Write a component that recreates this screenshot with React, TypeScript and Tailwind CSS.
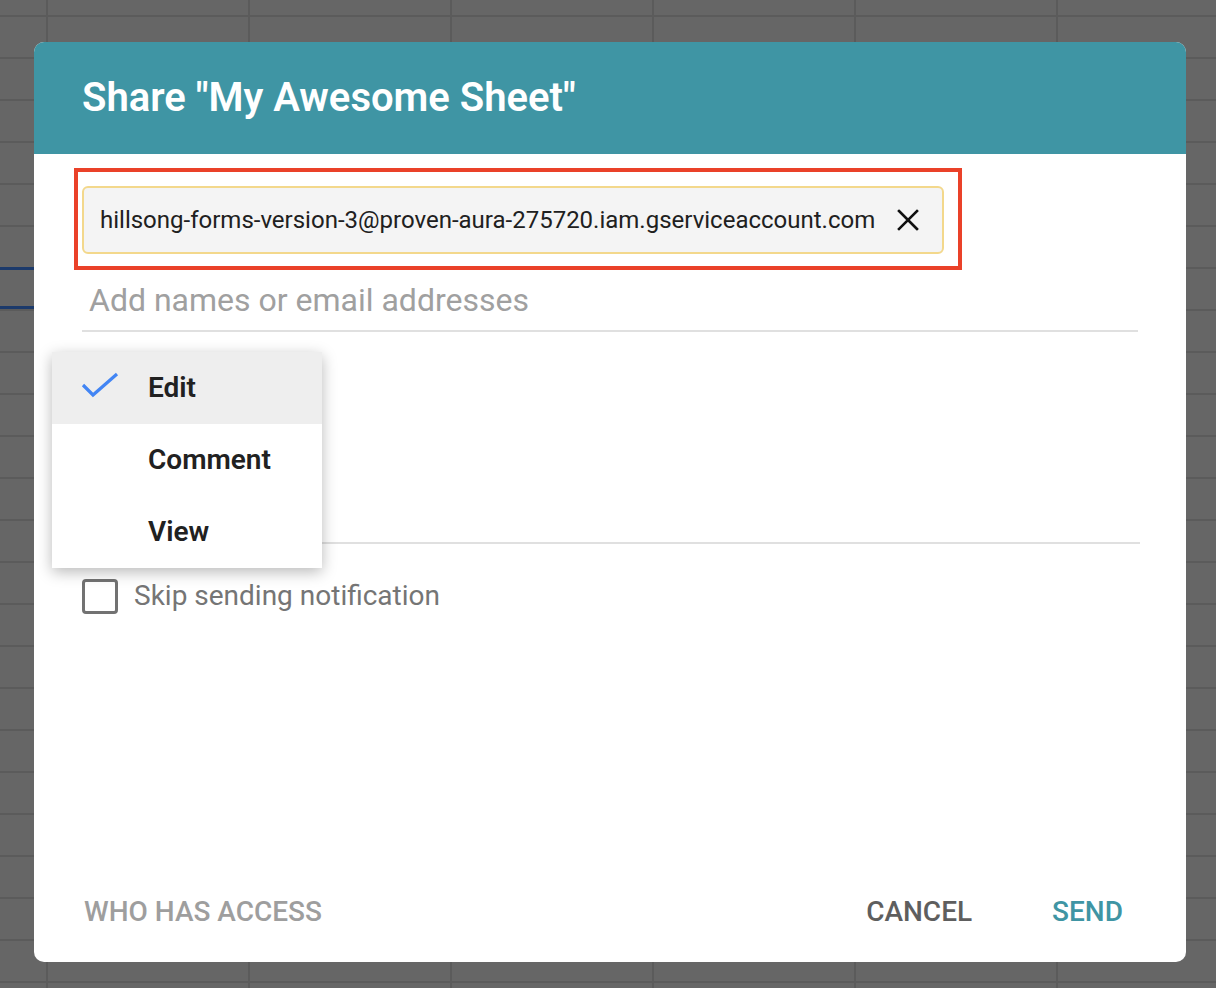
import React from "react";

export default function App() {
  return (
    <div
      className="relative w-[1216px] h-[988px] overflow-hidden bg-[#666666] bg-[linear-gradient(to_right,#5b5b5b_2px,transparent_2px),linear-gradient(to_bottom,#5b5b5b_2px,transparent_2px)] [background-size:202px_42px] [background-position:46px_15px]"
      style={{ fontFamily: "Roboto, 'Noto Sans', sans-serif" }}
    >
      {/* selected cell border on sheet */}
      <div className="absolute left-0 top-[267px] w-[40px] h-[3px] bg-[#1c3a6b]" />
      <div className="absolute left-0 top-[306px] w-[40px] h-[3px] bg-[#1c3a6b]" />

      {/* dialog */}
      <div className="absolute left-[34px] top-[42px] w-[1152px] h-[920px] rounded-[10px] bg-white overflow-hidden flex flex-col">
        <div className="h-[112px] shrink-0 bg-[#3f95a4] pl-[48px] flex items-center">
          <h1 className="text-[40px] font-semibold text-white">
            Share "My Awesome Sheet"
          </h1>
        </div>

        <div className="relative flex-1 flex flex-col px-[48px]">
          {/* highlighted chip */}
          <div className="-ml-[8px] mt-[14px] w-[888px] h-[102px] border-[4px] border-[#ea4129] pl-[4px] pt-[14px]">
            <div className="w-[862px] h-[68px] rounded-[6px] border-2 border-[#f3d88c] bg-[#f4f4f4] flex items-center pl-[16px] pr-[22px] justify-between">
              <span className="text-[24px] text-[#202020]">
                hillsong-forms-version-3@proven-aura-275720.iam.gserviceaccount.com
              </span>
              <svg width="24" height="24" viewBox="0 0 24 24" className="shrink-0">
                <path d="M3 3 L21 21 M21 3 L3 21" stroke="#111" strokeWidth="2.6" strokeLinecap="square" />
              </svg>
            </div>
          </div>

          <div className="h-[62px] flex items-center pl-[7px] border-b-2 border-[#e0e0e0]">
            <span className="text-[32px] text-[#a0a0a0]">Add names or email addresses</span>
          </div>

          <div className="h-[212px] border-b-2 border-[#e0e0e0] mr-[-2px]" />

          <div className="mt-[31px] flex items-center">
            <div className="w-[36px] h-[35px] rounded-[4px] border-[3px] border-[#727272]" />
            <span className="ml-[16px] text-[28px] text-[#757575]">Skip sending notification</span>
          </div>

          <div className="mt-auto mb-[29px] -mx-[48px] pl-[50px] pr-[63px] flex items-center">
            <span className="text-[28px] font-medium text-[#9e9e9e]">WHO HAS ACCESS</span>
            <span className="ml-auto text-[28px] font-medium text-[#5e5e5e]">CANCEL</span>
            <span className="ml-[80px] text-[28px] font-medium text-[#3f95a4]">SEND</span>
          </div>

          {/* permission menu */}
          <div className="absolute left-[18px] top-[198px] w-[270px] bg-white shadow-[0_4px_14px_rgba(0,0,0,0.28)] flex flex-col">
            <div className="h-[72px] bg-[#eeeeee] flex items-center relative pl-[96px]">
              <svg width="40" height="30" viewBox="0 0 40 30" className="absolute left-[29px] top-[20px]">
                <path d="M2 13 L12 23 L36 2" fill="none" stroke="#4285f4" strokeWidth="3.2" />
              </svg>
              <span className="text-[28px] font-semibold text-[#212121]">Edit</span>
            </div>
            <div className="h-[72px] flex items-center pl-[96px]">
              <span className="text-[28px] font-semibold text-[#212121]">Comment</span>
            </div>
            <div className="h-[72px] flex items-center pl-[96px]">
              <span className="text-[28px] font-semibold text-[#212121]">View</span>
            </div>
          </div>
        </div>
      </div>
    </div>
  );
}
